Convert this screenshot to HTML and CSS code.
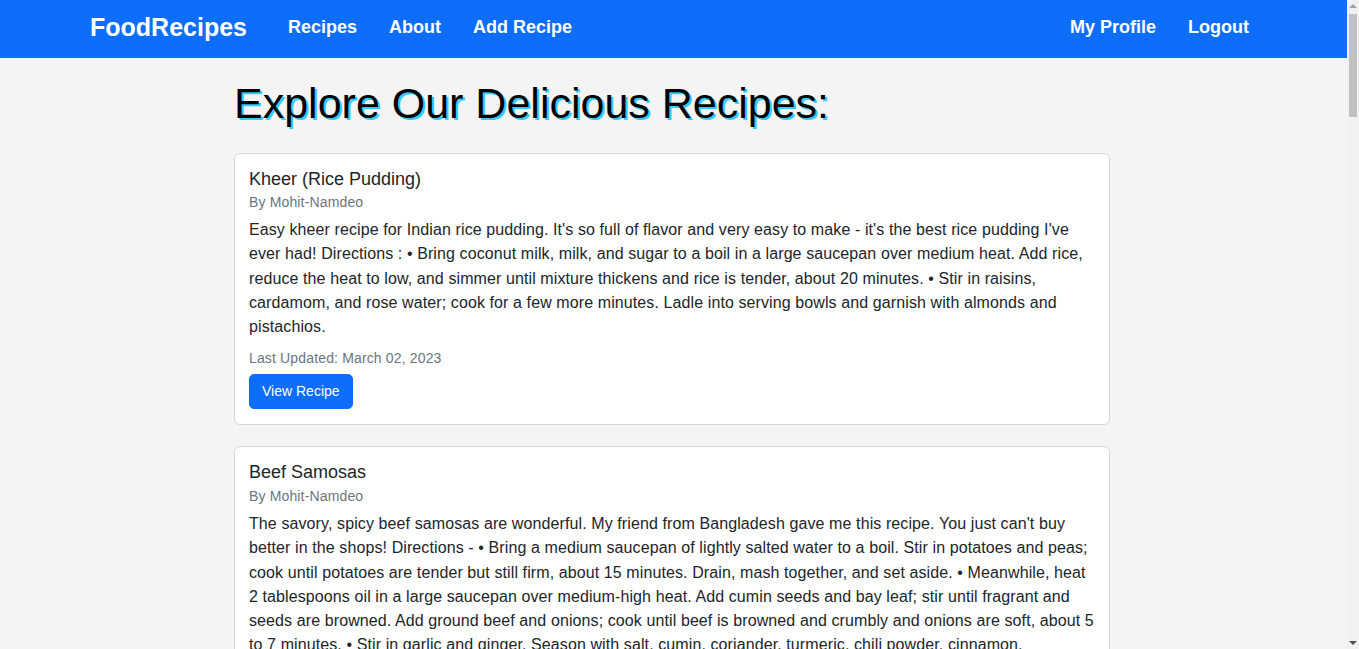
FILE: index.html
```html
<!DOCTYPE html>
<html lang="en">
<head>
<meta charset="utf-8">
<title>FoodRecipes</title>
<link rel="stylesheet" href="styles.css">
</head>
<body>
<div class="page">
<nav class="navbar">
  <div class="nav-left">
    <a class="brand" href="#">FoodRecipes</a>
    <a class="nav-link" href="#">Recipes</a>
    <a class="nav-link" href="#">About</a>
    <a class="nav-link" href="#">Add Recipe</a>
  </div>
  <div class="nav-right">
    <a class="nav-link" href="#">My Profile</a>
    <a class="nav-link" href="#">Logout</a>
  </div>
</nav>
<div class="content">
<main class="container">
  <h1 class="page-title">Explore Our Delicious Recipes:</h1>
  <div class="card">
    <h5 class="card-title">Kheer (Rice Pudding)</h5>
    <div class="card-author">By Mohit-Namdeo</div>
    <p class="card-text">Easy kheer recipe for Indian rice pudding. It's so full of flavor and very easy to make - it's the best rice pudding I've ever had! Directions : • Bring coconut milk, milk, and sugar to a boil in a large saucepan over medium heat. Add rice, reduce the heat to low, and simmer until mixture thickens and rice is tender, about 20 minutes. • Stir in raisins, cardamom, and rose water; cook for a few more minutes. Ladle into serving bowls and garnish with almonds and pistachios.</p>
    <div class="card-date">Last Updated: March 02, 2023</div>
    <a class="btn" href="#">View Recipe</a>
  </div>
  <div class="card">
    <h5 class="card-title">Beef Samosas</h5>
    <div class="card-author">By Mohit-Namdeo</div>
    <p class="card-text">The savory, spicy beef samosas are wonderful. My friend from Bangladesh gave me this recipe. You just can't buy better in the shops! Directions - • Bring a medium saucepan of lightly salted water to a boil. Stir in potatoes and peas; cook until potatoes are tender but still firm, about 15 minutes. Drain, mash together, and set aside. • Meanwhile, heat 2 tablespoons oil in a large saucepan over medium-high heat. Add cumin seeds and bay leaf; stir until fragrant and seeds are browned. Add ground beef and onions; cook until beef is browned and crumbly and onions are soft, about 5 to 7 minutes. • Stir in garlic and ginger. Season with salt, cumin, coriander, turmeric, chili powder, cinnamon, cardamom, and garam masala. Cook and stir for 1 minute. Remove from heat and stir in the potato mixture. Let cool.</p>
    <div class="card-date">Last Updated: March 02, 2023</div>
    <a class="btn" href="#">View Recipe</a>
  </div>
</main>
</div>
</div>
<div class="scrollbar">
  <span class="arrow arrow-up"></span>
  <span class="thumb"></span>
  <span class="track-fill"></span>
  <span class="arrow arrow-down"></span>
</div>
</body>
</html>
```
FILE: styles.css
```css
* { box-sizing: border-box; }
html, body { height: 100%; }
body {
  margin: 0;
  background: #f4f4f4;
  font-family: "Liberation Sans", Arial, sans-serif;
  color: #212529;
  display: flex;
  overflow: hidden;
}
.page {
  flex: 1;
  min-width: 0;
  height: 100vh;
  overflow: hidden;
}
.scrollbar {
  width: 12px;
  flex: none;
  height: 100vh;
  background: #f1f1f1;
  display: flex;
  flex-direction: column;
  align-items: center;
  padding: 4px 0 4px 0;
}
.arrow {
  width: 0;
  height: 0;
  border-left: 4px solid transparent;
  border-right: 4px solid transparent;
}
.arrow-up {
  border-bottom: 4px solid #a3a3a3;
}
.arrow-down {
  border-top: 4px solid #505050;
}
.thumb {
  width: 8px;
  height: 103px;
  margin-top: 6px;
  background: #c1c1c1;
}
.track-fill { flex: 1; }
a { text-decoration: none; }
.navbar {
  height: 58px;
  background: #0d6efd;
  display: flex;
  align-items: center;
  justify-content: space-between;
  padding: 0 82px 4px 90px;
}
.nav-left, .nav-right {
  display: flex;
  align-items: center;
}
.brand {
  color: #fff;
  font-size: 25px;
  font-weight: bold;
  margin-right: 25px;
}
.nav-link {
  color: #fff;
  font-size: 18px;
  font-weight: bold;
  padding: 0 16px;
}
.content {
  padding-right: 3px;
}
.container {
  width: 876px;
  margin: 0 auto;
  padding-top: 20px;
}
.page-title {
  font-size: 43px;
  font-weight: normal;
  color: #000;
  text-shadow: 2px 2px 0 #33ccff;
  margin: 0 0 23px 0;
  line-height: 1.2;
}
.card {
  background: #fff;
  border: 1px solid #d6d6d6;
  border-radius: 6px;
  padding: 15px 14px;
  margin-bottom: 21px;
}
.card-title {
  font-size: 18px;
  font-weight: normal;
  margin: 0;
  line-height: 1.2;
}
.card-author {
  font-size: 14px;
  color: #6c757d;
  line-height: 21px;
  margin-top: 2px;
  letter-spacing: 0.15px;
}
.card-text {
  font-size: 16px;
  line-height: 24.25px;
  letter-spacing: 0.1px;
  margin: 5px 0 9px 0;
}
.card-date {
  font-size: 14px;
  color: #6c757d;
  line-height: 21px;
  margin-bottom: 5px;
  letter-spacing: 0.15px;
}
.btn {
  display: inline-block;
  background: #0d6efd;
  color: #fff;
  font-size: 14px;
  line-height: 21px;
  padding: 6px 12px;
  border: 1px solid #0d6efd;
  border-radius: 5px;
}
```
